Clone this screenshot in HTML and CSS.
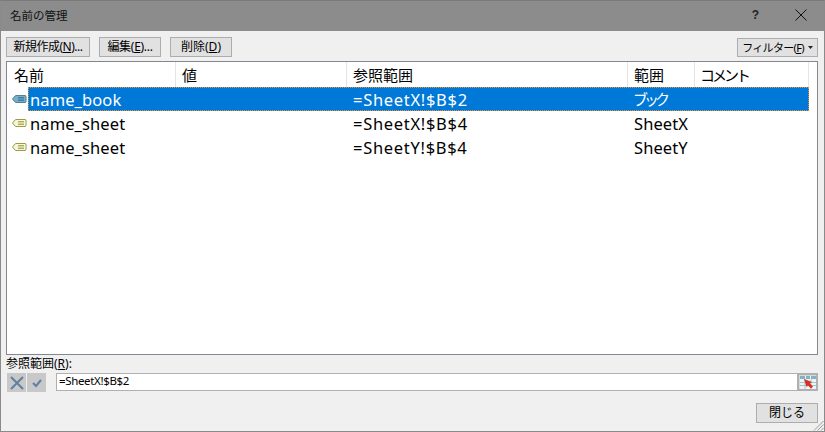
FILE: index.html
```html
<!DOCTYPE html>
<html lang="ja">
<head>
<meta charset="utf-8">
<title>名前の管理</title>
<link rel="stylesheet" href="styles.css">
</head>
<body>
<div class="dialog">
  <header class="titlebar">
    <span class="title">名前の管理</span>
    <span class="help">?</span>
    <svg class="close" width="12" height="12" viewBox="0 0 12 12"><path d="M.5.5l11 11M11.5.5l-11 11" stroke="#111" fill="none"/></svg>
  </header>
  <main class="client">
    <div class="toolbar">
      <button class="btn btn-new"><span>新規作成(<u>N</u>)...</span></button>
      <button class="btn btn-edit"><span>編集(<u>E</u>)...</span></button>
      <button class="btn btn-del"><span>削除(<u>D</u>)</span></button>
      <button class="btn btn-filter"><span>フィルター(<u>F</u>)</span><svg class="arrow" width="5" height="3" viewBox="0 0 5 3"><path d="M0 0h5L2.500 3z" fill="#222"/></svg></button>
    </div>
    <div class="list">
      <div class="row head">
        <span class="c c1">名前</span><span class="c c2">値</span><span class="c c3">参照範囲</span><span class="c c4">範囲</span><span class="c c5"><span class="kana-head">コメント</span></span>
      </div>
      <div class="row item selected">
        <svg class="tag" width="15" height="10" viewBox="0 0 15 10"><path d="M.5 5L3 2q.5-.5 1-.5h9q1 0 1 1v5q0 1-1 1H4q-.5 0-1-.5z" fill="#79adc8" stroke="#4f8296"/><path d="M6 3.500h6M6 5h6M6 6.500h6" stroke="#3f7f9f"/></svg>
        <div class="cells"><span class="c c1x">name_book</span><span class="c c3">=SheetX!$B$2</span><span class="c c4 kana">ブック</span></div>
      </div>
      <div class="row item">
        <svg class="tag" width="15" height="10" viewBox="0 0 15 10"><path d="M.5 5L3 2q.5-.5 1-.5h9q1 0 1 1v5q0 1-1 1H4q-.5 0-1-.5z" fill="#f8f8d8" stroke="#9a9a48"/><path d="M6 3.500h6M6 5h6M6 6.500h6" stroke="#b0b060"/></svg>
        <div class="cells"><span class="c c1x">name_sheet</span><span class="c c3">=SheetX!$B$4</span><span class="c c4">SheetX</span></div>
      </div>
      <div class="row item">
        <svg class="tag" width="15" height="10" viewBox="0 0 15 10"><path d="M.5 5L3 2q.5-.5 1-.5h9q1 0 1 1v5q0 1-1 1H4q-.5 0-1-.5z" fill="#f8f8d8" stroke="#9a9a48"/><path d="M6 3.500h6M6 5h6M6 6.500h6" stroke="#b0b060"/></svg>
        <div class="cells"><span class="c c1x">name_sheet</span><span class="c c3">=SheetY!$B$4</span><span class="c c4">SheetY</span></div>
      </div>
    </div>
    <div class="ref-label">参照範囲(<u>R</u>):</div>
    <div class="ref-row">
      <span class="icon-btn"><svg width="16" height="16" viewBox="0 0 16 16"><path d="M2 2l12 12M14 2L2 14" stroke="#5f7f9f" stroke-width="2" fill="none"/></svg></span>
      <span class="icon-btn"><svg width="12" height="10" viewBox="0 0 12 10"><path d="M2 5l3 3 5-6" stroke="#5f7fa8" stroke-width="2" fill="none"/></svg></span>
      <div class="ref-input">
        <span class="ref-text">=SheetX!$B$2</span>
        <span class="ref-pick"><svg width="16" height="13" viewBox="0 0 16 13"><path d="M0 0h16v13H0z" fill="#eef4f6"/><path d="M0 0h5v3H0zM6 0h4v3H6zM11 0h5v3h-5z" fill="#7fb4c4"/><path d="M0 6.500h16M0 9.500h16M5 3v10M11 3v10" stroke="#a8c4cf"/><path d="M4 3l8 3-2 1.500 3 3-2 2-3-3L6.500 11z" fill="#d8301f"/></svg></span>
      </div>
    </div>
    <div class="footer"><button class="btn btn-close">閉じる</button></div>
  </main>
  <svg class="grip" width="11" height="11" viewBox="0 0 11 11"><path d="M10.500 1L1 10.500M10.500 4.500L4.500 10.500M10.500 8L8 10.500" stroke="#9a9a9a" fill="none"/></svg>
</div>
</body>
</html>
```
FILE: styles.css
```css
* { box-sizing: border-box; }
html, body { margin: 0; height: 100%; }
body { font-family: "Noto Sans", "Noto Sans CJK JP", sans-serif; font-size: 12px; color: #000; overflow: hidden; }
.dialog { position: relative; width: 825px; height: 432px; display: flex; flex-direction: column; background: #f0f0f0; border: 1px solid #8a8a8a; border-top-color: #7a7a7a; }
.titlebar { height: 30px; flex: none; background: #8c8c8c; display: flex; align-items: center; padding: 0 17px 2px 9px; }
.title { flex: 1; font-size: 11.500px; color: #111; }
.help { font: bold 12px "Liberation Sans", sans-serif; margin-right: 36px; color: #222; }
.close { display: block; }
.client { flex: 1; display: flex; flex-direction: column; padding: 6px 6px 8px 5px; min-height: 0; }
.toolbar { display: flex; height: 20px; flex: none; margin-bottom: 4px; }
.btn { font: 12px "Noto Sans", "Noto Sans CJK JP", sans-serif; color: #000; background: #e1e1e1; border: 1px solid #adadad; height: 20px; padding: 0; display: flex; align-items: center; justify-content: center; line-height: 1; white-space: nowrap; }
.btn-new { width: 84px; letter-spacing: -.5px; }
.btn-edit { width: 62px; margin-left: 9px; letter-spacing: -.3px; }
.btn-del { width: 62px; margin-left: 9px; }
.btn-filter { width: 81px; margin-left: auto; margin-top: 1px; height: 19px; gap: 4px; font-size: 11px; letter-spacing: -.7px; }
.arrow { flex: none; }
.list { height: 294px; flex: none; background: #fff; border: 1px solid #828790; padding: 0 0 0 1px; font-size: 15px; }
.row { display: flex; align-items: center; white-space: nowrap; }
.head { height: 25px; }
.head .c { height: 25px; line-height: 27px; padding-left: 6px; border-right: 1px solid #e5e5e5; }
.kana-head { letter-spacing: -3px; margin-left: -1px; }
.item { height: 24px; font-size: 16.500px; }
.tag { flex: none; margin: 0 1px 0 4px; }
.cells { flex: 1; display: flex; height: 24px; line-height: 23px; margin-right: 8px; border: 1px dotted transparent; }
.selected .cells { background: #0078d7; color: #fff; border-color: #f09020; }
.c { display: block; flex: none; }
.c1 { width: 168px; }
.c1x { width: 318px; padding-left: 1px; letter-spacing: .1px; }
.c2 { width: 171px; }
.c3 { width: 281px; padding-left: 6px; }
.item .c3 { letter-spacing: .7px; }
.c4 { width: 67px; padding-left: 6px; }
.item .c4 { width: auto; letter-spacing: .1px; }
.item .kana { font-size: 15px; letter-spacing: -4px; padding-left: 5px; }
.head .c5 { width: 114px; }
.ref-label { font-size: 12px; height: 18px; line-height: 17px; flex: none; }
.ref-row { display: flex; height: 18px; flex: none; align-items: stretch; }
.icon-btn { width: 19px; height: 19px; margin-left: 1px; background: #c8c8c8; display: flex; align-items: center; justify-content: center; }
.icon-btn + .icon-btn { margin-right: 10px; }
.ref-input { flex: 1; display: flex; align-items: center; background: #fff; border: 1px solid #b0b0b0; border-right: 0; font-size: 11.500px; padding-left: 2px; line-height: 14px; }
.ref-text { flex: 1; margin-top: -2px; letter-spacing: -.35px; }
.ref-pick { width: 21px; height: 18px; background: #d8d8d8; border: 2px solid #b0b0b0; display: flex; align-items: center; justify-content: center; overflow: hidden; }
.footer { margin-top: auto; display: flex; justify-content: flex-end; flex: none; }
.btn-close { width: 62px; }
.grip { position: absolute; right: 0; bottom: 0; }
```
